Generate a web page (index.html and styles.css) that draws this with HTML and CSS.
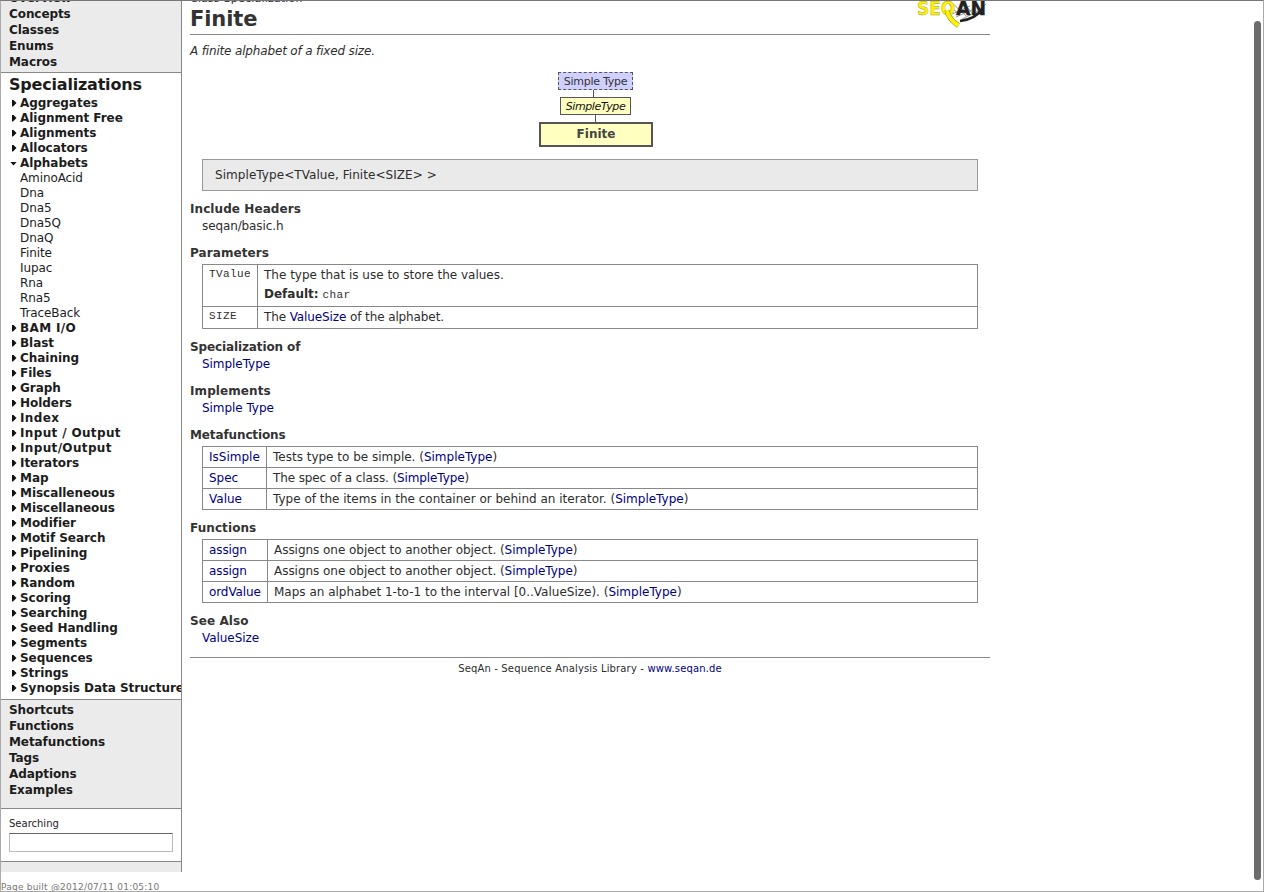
FILE: index.html
```html
<!DOCTYPE html>
<html lang="en">
<head>
<meta charset="utf-8">
<title>SeqAn - Finite</title>
<link rel="stylesheet" href="styles.css">
</head>
<body>
<div class="window">
  <aside class="side">
    <nav class="nav">
      <div class="gray top">
        <a>Overview</a><a>Concepts</a><a>Classes</a><a>Enums</a><a>Macros</a>
      </div>
      <div class="tree">
        <h2>Specializations</h2>
        <ul>
          <li class="node">Aggregates</li>
          <li class="node">Alignment Free</li>
          <li class="node">Alignments</li>
          <li class="node">Allocators</li>
          <li class="node open">Alphabets</li>
          <li>AminoAcid</li>
          <li>Dna</li>
          <li>Dna5</li>
          <li>Dna5Q</li>
          <li>DnaQ</li>
          <li>Finite</li>
          <li>Iupac</li>
          <li>Rna</li>
          <li>Rna5</li>
          <li>TraceBack</li>
          <li class="node wide">BAM I/O</li>
          <li class="node">Blast</li>
          <li class="node">Chaining</li>
          <li class="node">Files</li>
          <li class="node">Graph</li>
          <li class="node">Holders</li>
          <li class="node wide">Index</li>
          <li class="node wide">Input / Output</li>
          <li class="node wide">Input/Output</li>
          <li class="node">Iterators</li>
          <li class="node">Map</li>
          <li class="node">Miscalleneous</li>
          <li class="node">Miscellaneous</li>
          <li class="node">Modifier</li>
          <li class="node">Motif Search</li>
          <li class="node">Pipelining</li>
          <li class="node">Proxies</li>
          <li class="node">Random</li>
          <li class="node">Scoring</li>
          <li class="node">Searching</li>
          <li class="node">Seed Handling</li>
          <li class="node">Segments</li>
          <li class="node">Sequences</li>
          <li class="node">Strings</li>
          <li class="node">Synopsis Data Structures</li>
        </ul>
      </div>
      <div class="gray bottom">
        <a>Shortcuts</a><a>Functions</a><a>Metafunctions</a><a>Tags</a><a>Adaptions</a><a>Examples</a>
      </div>
      <div class="search">
        <label for="q">Searching</label>
        <input id="q" type="text">
      </div>
      <div class="tail"></div>
    </nav>
    <div class="built">Page built @2012/07/11 01:05:10</div>
  </aside>
  <main class="page">
    <header class="head">
      <div>
        <div class="kind">Class Specialization</div>
        <h1>Finite</h1>
      </div>
      <svg class="logo" width="76" height="36" viewBox="0 0 76 36">
        <path d="M34 9 L46 22 M38 9 L52 22 M50 10 L60 21 M38 20 L56 12 M42 23 L60 15 M48 25 L64 17 M56 25 L72 10" stroke="#999" stroke-width="1"/>
        <path d="M46 27 Q62 25 69 14" fill="none" stroke="#222" stroke-width="2.6"/>
        <text class="logo-seq" x="3" y="21" textLength="38" lengthAdjust="spacingAndGlyphs">SEQ</text>
        <path d="M33 16 Q34 25 44.500 31.500" fill="none" stroke="#8c8c3c" stroke-width="5"/>
        <path d="M33 16 Q34 25 44.500 31.500" fill="none" stroke="#fff200" stroke-width="4"/>
        <text class="logo-an" x="42" y="21" textLength="30" lengthAdjust="spacingAndGlyphs">AN</text>
      </svg>
    </header>
    <p class="brief">A finite alphabet of a fixed size.</p>
    <div class="diagram">
      <span class="box concept">Simple Type</span>
      <i class="link l1"></i>
      <span class="box parent">SimpleType</span>
      <i class="link l2"></i>
      <span class="box self">Finite</span>
    </div>
    <div class="sig">SimpleType&lt;TValue, Finite&lt;SIZE&gt; &gt;</div>

    <h3>Include Headers</h3>
    <div class="text tight">seqan/basic.h</div>

    <h3>Parameters</h3>
    <table class="params">
      <tr class="tall"><td class="c1"><code>TValue</code></td><td>The type that is use to store the values.<div class="def"><b>Default:</b> <code>char</code></div></td></tr>
      <tr class="short"><td class="c1"><code>SIZE</code></td><td class="tight">The <a>ValueSize</a> of the alphabet.</td></tr>
    </table>

    <h3 class="narrow">Specialization of</h3>
    <div class="text"><a>SimpleType</a></div>

    <h3>Implements</h3>
    <div class="text"><a>Simple Type</a></div>

    <h3 class="narrow">Metafunctions</h3>
    <table class="meta">
      <tr><td class="c1"><a>IsSimple</a></td><td>Tests type to be simple. (<a>SimpleType</a>)</td></tr>
      <tr><td class="c1"><a>Spec</a></td><td class="tight">The spec of a class. (<a>SimpleType</a>)</td></tr>
      <tr><td class="c1"><a>Value</a></td><td>Type of the items in the container or behind an iterator. (<a>SimpleType</a>)</td></tr>
    </table>

    <h3>Functions</h3>
    <table class="funcs">
      <tr><td class="c1"><a>assign</a></td><td class="snug">Assigns one object to another object. (<a>SimpleType</a>)</td></tr>
      <tr><td class="c1"><a>assign</a></td><td class="snug">Assigns one object to another object. (<a>SimpleType</a>)</td></tr>
      <tr><td class="c1"><a>ordValue</a></td><td>Maps an alphabet 1-to-1 to the interval [0..ValueSize). (<a>SimpleType</a>)</td></tr>
    </table>

    <h3>See Also</h3>
    <div class="text"><a>ValueSize</a></div>

    <footer class="foot">SeqAn - Sequence Analysis Library - <a>www.seqan.de</a></footer>
  </main>
  <div class="scroll"></div>
</div>
</body>
</html>
```

FILE: styles.css
```css
* { box-sizing: border-box; }
body { margin: 0; background: #fff; color: #222; font: 12px/15px "DejaVu Sans", sans-serif; }
h1, h2, h3, p, ul { margin: 0; padding: 0; }
.window { position: relative; display: flex; width: 1264px; height: 892px; overflow: hidden; border: 1px solid #aaa; border-top-color: #777; }

.side { width: 181px; flex: none; color: #1c1c1c; }
.nav { height: 871px; border-right: 1px solid #888; overflow: hidden; }
.gray { background: #ebebeb; font-weight: bold; letter-spacing: -.08px; }
.gray a { display: block; height: 16px; line-height: 16px; padding-left: 8px; }
.top { height: 71px; overflow: hidden; }
.top a:first-child { margin-top: -11px; }
.tree { height: 628px; border-top: 1px solid #888; border-bottom: 1px solid #888; overflow: hidden; }
.tree h2 { font-size: 16px; line-height: 22px; padding: 1px 0 0 8px; letter-spacing: -.2px; }
.tree ul { list-style: none; }
.tree li { height: 15px; padding-left: 19px; white-space: nowrap; letter-spacing: -.1px; }
.tree .node { display: flex; align-items: center; padding-left: 11px; font-weight: bold; letter-spacing: -.04px; }
.tree .wide { letter-spacing: .35px; }
.node::before { content: ""; flex: none; width: 8px; height: 7px; margin-top: -1px; background: #111; clip-path: polygon(0 0, 1px 0, 4.5px 50%, 1px 100%, 0 100%); }
.tree .open { padding-left: 9px; }
.tree .open::before { width: 10px; height: 4px; margin-top: 0; clip-path: polygon(0 0, 7px 0, 3.5px 100%); }
.bottom { height: 108px; padding-top: 2px; }
.search { height: 54px; padding: 8px 8px 0; border-top: 1px solid #888; border-bottom: 1px solid #888; font-size: 10px; }
.search label { display: block; height: 16px; line-height: 14px; }
.search input { display: block; width: 164px; height: 19px; border: 1px solid #bbb; border-top: 1px solid #666; outline: 0; padding: 0; }
.tail { height: 20px; background: #ebebeb; }
.built { margin-top: 8px; font-size: 9px; line-height: 14px; letter-spacing: .22px; color: #777; white-space: nowrap; }

.page { width: 800px; margin-left: 8px; color: #2d2d2d; }
.page a { color: #000080; }
.head { display: flex; justify-content: space-between; height: 34px; border-bottom: 1px solid #888; overflow: hidden; }
.kind { margin-top: -9px; font-size: 11px; line-height: 14px; letter-spacing: .2px; }
h1 { font-size: 21px; line-height: 26px; letter-spacing: -.1px; color: #333; }
.logo { margin-top: -7px; }
.logo text { font: bold 20px "DejaVu Sans", sans-serif; stroke-width: .4px; }
.logo-seq { fill: #fff200; stroke: #98983a; }
.logo-an { fill: #222; stroke: #222; }
.brief { margin-top: 9px; font-style: italic; letter-spacing: -.16px; }
.diagram { display: flex; flex-direction: column; align-items: center; margin-top: 13px; padding-left: 12px; }
.box { border: 1px solid #555; background: #ffffc0; text-align: center; white-space: nowrap; }
.concept { width: 75px; height: 18px; margin-right: 1px; line-height: 17px; font-size: 11px; letter-spacing: -.25px; background: #d0d0ff; border-style: dashed; color: #333; }
.parent { width: 71px; height: 18px; margin-right: 1px; line-height: 17px; font-size: 11px; letter-spacing: -.4px; font-style: italic; color: #111; }
.self { width: 114px; height: 25px; line-height: 21px; border-width: 2px; font-weight: bold; color: #444; }
.link { width: 1px; background: #555; }
.l1 { height: 7px; margin-right: 5px; }
.l2 { height: 7px; margin-right: 1px; }
.sig { margin: 12px 12px 0; height: 32px; line-height: 30px; padding-left: 12px; letter-spacing: .06px; background: #eaeaea; border: 1px solid #999; }
h3 { margin-top: 10px; font-size: 12px; line-height: 17px; letter-spacing: .08px; color: #333; }
.narrow { letter-spacing: -.12px; }
.text { padding-left: 12px; line-height: 17px; letter-spacing: -.05px; }
table { width: 776px; margin: 2px 12px 0; border-collapse: collapse; table-layout: fixed; }
td { height: 21px; padding: 0 6px; border: 1px solid #888; line-height: 20px; vertical-align: top; }
.tight { letter-spacing: -.11px; }
.snug { letter-spacing: -.04px; }
.params .tall td { height: 42px; padding-top: 1px; line-height: 19px; }
.params .short td { height: 22px; }
.params .short .c1 { padding-top: 1px; }
.params .c1 { width: 55px; }
.params .c1 code { display: block; line-height: 17px; }
.meta .c1 { width: 64px; }
.funcs .c1 { width: 65px; letter-spacing: -.1px; }
code { font: 11px "Liberation Mono", monospace; letter-spacing: .4px; }
.foot { margin-top: 10px; padding-top: 3px; border-top: 1px solid #888; font-size: 10px; letter-spacing: .15px; text-align: center; }

.scroll { position: absolute; right: 2px; top: 20px; width: 7px; height: 859px; border-radius: 4px; background: #6c6c6c; }
```
